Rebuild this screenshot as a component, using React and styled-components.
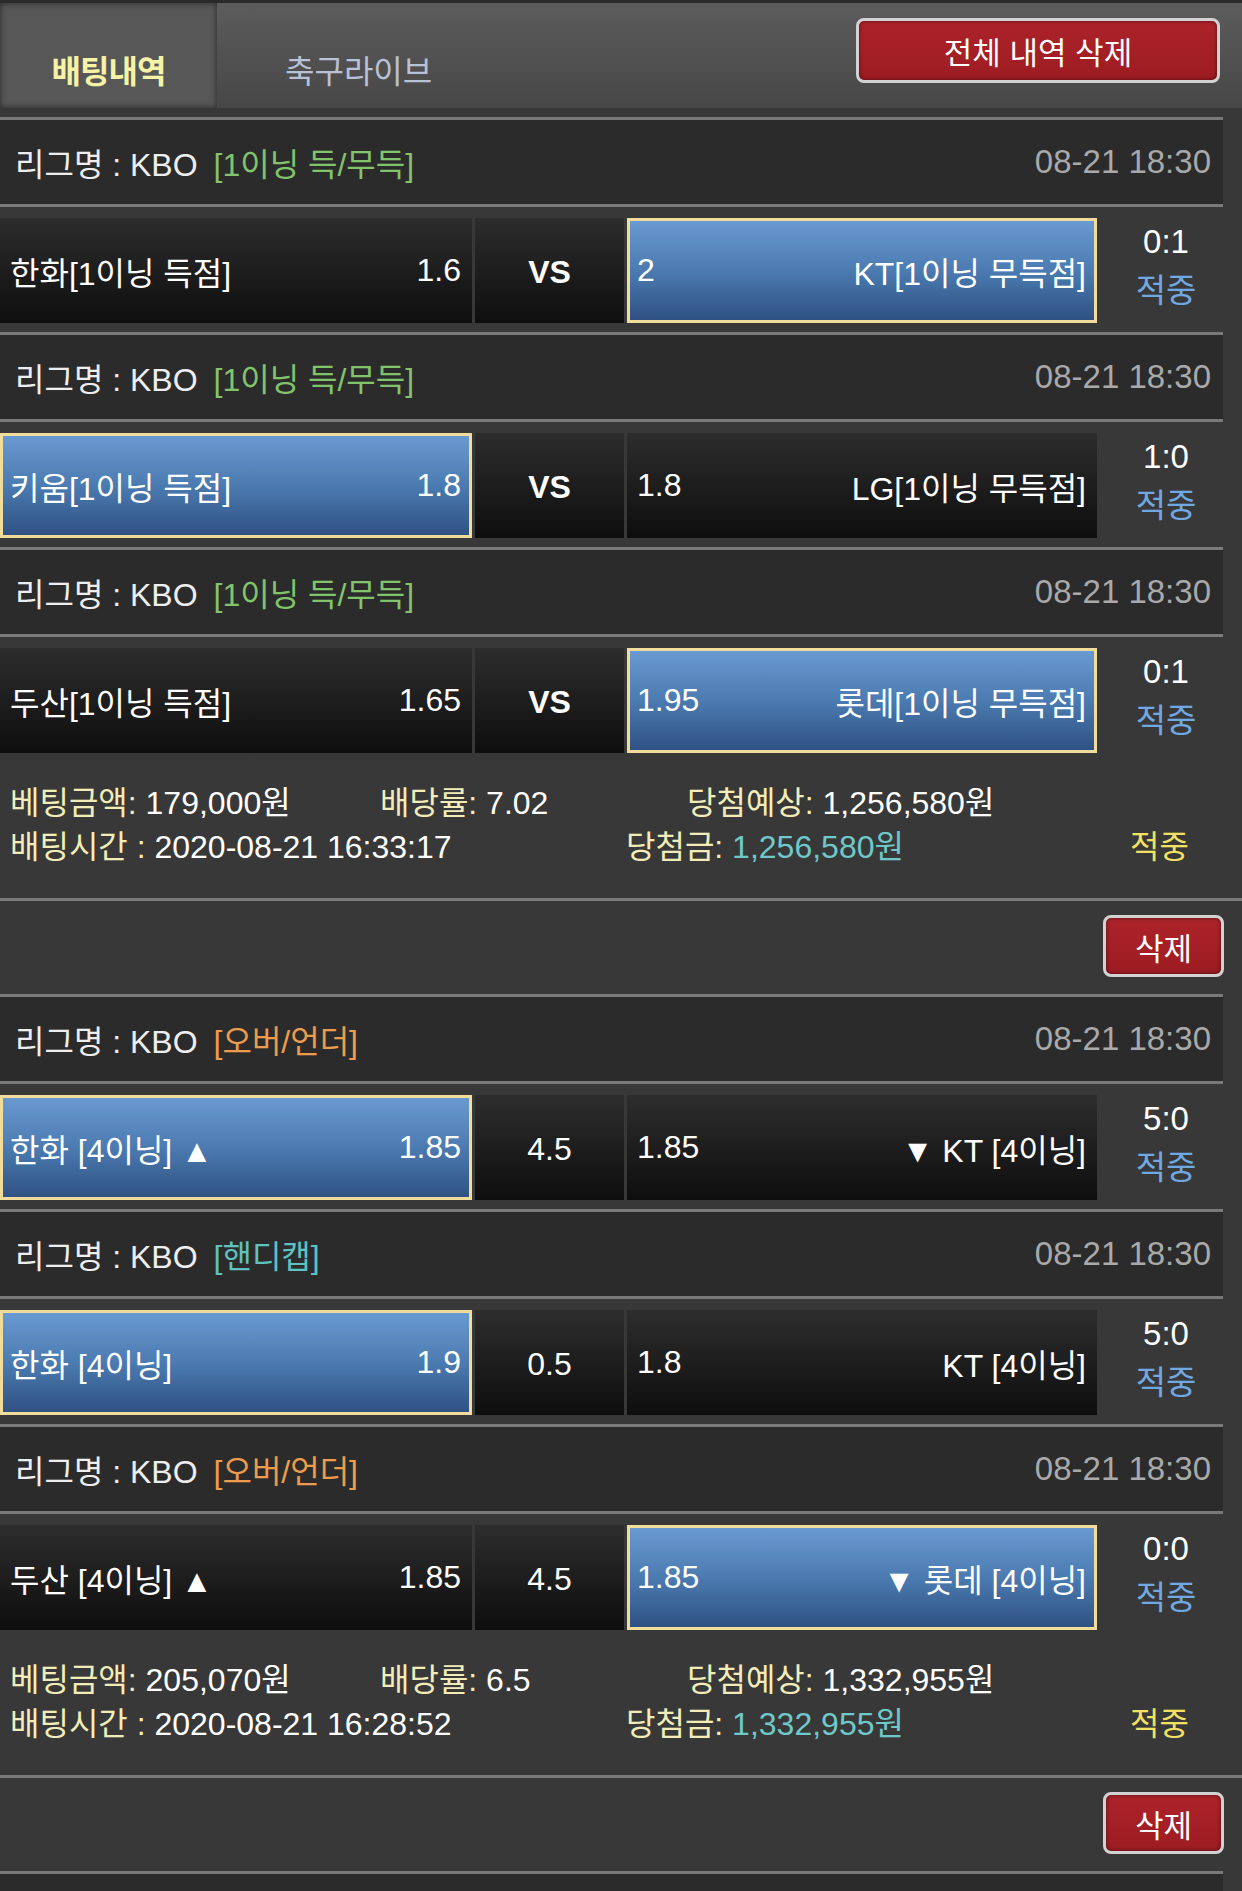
import React from 'react';
import styled, { createGlobalStyle, css } from 'styled-components';

const GlobalStyle = createGlobalStyle`
  html, body { margin: 0; padding: 0; background: #383838; }
  body {
    font-family: "Liberation Sans", "Noto Sans CJK KR", sans-serif;
    font-feature-settings: "palt";
  }
  * { box-sizing: border-box; }
`;

const Screen = styled.div`
  width: 1242px;
  height: 1891px;
  overflow: hidden;
  background: #383838;
  color: #ffffff;
  font-size: 31px;
`;

const Header = styled.header`
  display: flex;
  align-items: stretch;
  height: 108px;
  border-top: 3px solid #2a2a2a;
  background: linear-gradient(#5c5c5c, #474747);
  margin-bottom: 9px;
`;

const Tab = styled.div`
  display: flex;
  align-items: center;
  padding-top: 26px;
  font-size: 32px;
  ${(p) =>
    p.$active
      ? css`
          width: 217px;
          justify-content: center;
          background: #575757;
          box-shadow: inset 0 0 6px rgba(0, 0, 0, 0.55);
          color: #f6f2a6;
          font-weight: bold;
          letter-spacing: -1px;
        `
      : css`
          padding-left: 68px;
          color: #b9c1d6;
        `}
`;

const RedButton = styled.button`
  align-self: flex-start;
  background: linear-gradient(#ad232a, #9c1c22);
  border: 3px solid #d2d2d2;
  border-radius: 8px;
  color: #ffffff;
  font-family: inherit;
  font-size: 31px;
  box-shadow: inset 0 0 4px rgba(0, 0, 0, 0.5);
  cursor: pointer;
  padding: 0;
  ${(p) =>
    p.$wide
      ? css`
          width: 364px;
          height: 65px;
          margin: 15px 22px 0 auto;
        `
      : css`
          width: 121px;
          height: 62px;
        `}
`;

const LeagueRow = styled.div`
  width: 1223px;
  height: 90px;
  border-top: 3px solid #7a7a7a;
  border-bottom: 3px solid #7a7a7a;
  background: #2b2b2b;
  display: flex;
  align-items: center;
  padding: 0 12px 0 15px;
  font-size: 32px;
`;

const TailRow = styled.div`
  width: 1223px;
  height: 40px;
  border-top: 3px solid #7a7a7a;
  background: #2b2b2b;
`;

const LeagueName = styled.span`
  color: #eeeeee;
`;

const tagColors = {
  green: '#82c46c',
  orange: '#eb9c4c',
  teal: '#5ec2c0',
};

const Tag = styled.span`
  margin-left: 16px;
  color: ${(p) => tagColors[p.$tone]};
`;

const DateText = styled.span`
  margin-left: auto;
  color: #a9a9a9;
  font-size: 33px;
`;

const MatchRow = styled.div`
  display: flex;
  width: 1223px;
  height: 105px;
  margin: 11px 0 9px 0;
`;

const cellBg = css`
  background: linear-gradient(#2d2d2d, #0e0e0e);
`;

const Side = styled.div`
  display: flex;
  align-items: center;
  justify-content: space-between;
  width: ${(p) => p.$w}px;
  padding: 0 11px 0 10px;
  font-size: 32px;
  color: #ffffff;
  white-space: nowrap;
  ${(p) =>
    p.$picked
      ? css`
          background: linear-gradient(#6a9bd2, #4b7bb1 50%, #2e4f80);
          box-shadow: inset 0 0 0 3px #f1dc9b;
        `
      : cellBg}
`;

const Mid = styled.div`
  ${cellBg};
  width: 149px;
  margin: 0 3px;
  display: flex;
  align-items: center;
  justify-content: center;
  font-size: 32px;
  font-weight: ${(p) => (p.$bold ? 'bold' : 'normal')};
  padding-top: 3px;
`;

const ScoreCol = styled.div`
  flex: 1;
  display: flex;
  flex-direction: column;
  align-items: center;
  padding: 1px 0 0 12px;
  font-size: 33px;
`;

const ScoreLine = styled.div`
  height: 46px;
  display: flex;
  align-items: center;
`;

const Result = styled.span`
  color: ${(p) => (p.$tone === 'yellow' ? '#f2e162' : '#70a9e2')};
`;

const Info = styled.div`
  padding: 15px 0 33px 10px;
  font-size: 32px;
`;

const InfoLine = styled.div`
  display: grid;
  grid-template-columns: ${(p) => p.$cols};
  align-items: center;
  height: 44px;
  white-space: nowrap;
`;

const Label = styled.span`
  color: #f2edb8;
`;

const Value = styled.span`
  color: ${(p) => (p.$teal ? '#6fc9c9' : '#ffffff')};
`;

const DeleteRow = styled.div`
  border-top: 3px solid #7a7a7a;
  height: 96px;
  display: flex;
  justify-content: flex-end;
  align-items: flex-start;
  padding: 14px 18px 0 0;
`;

const bets = [
  {
    games: [
      { tag: '[1이닝 득/무득]', tone: 'green', date: '08-21 18:30', home: '한화[1이닝 득점]', homeOdds: '1.6', mid: 'VS', bold: true, awayOdds: '2', away: 'KT[1이닝 무득점]', pick: 'away', score: '0:1', result: '적중' },
      { tag: '[1이닝 득/무득]', tone: 'green', date: '08-21 18:30', home: '키움[1이닝 득점]', homeOdds: '1.8', mid: 'VS', bold: true, awayOdds: '1.8', away: 'LG[1이닝 무득점]', pick: 'home', score: '1:0', result: '적중' },
      { tag: '[1이닝 득/무득]', tone: 'green', date: '08-21 18:30', home: '두산[1이닝 득점]', homeOdds: '1.65', mid: 'VS', bold: true, awayOdds: '1.95', away: '롯데[1이닝 무득점]', pick: 'away', score: '0:1', result: '적중' },
    ],
    amount: '179,000원', rate: '7.02', expected: '1,256,580원', time: '2020-08-21 16:33:17', win: '1,256,580원', status: '적중',
  },
  {
    games: [
      { tag: '[오버/언더]', tone: 'orange', date: '08-21 18:30', home: '한화 [4이닝] ▲', homeOdds: '1.85', mid: '4.5', bold: false, awayOdds: '1.85', away: '▼ KT [4이닝]', pick: 'home', score: '5:0', result: '적중' },
      { tag: '[핸디캡]', tone: 'teal', date: '08-21 18:30', home: '한화 [4이닝]', homeOdds: '1.9', mid: '0.5', bold: false, awayOdds: '1.8', away: 'KT [4이닝]', pick: 'home', score: '5:0', result: '적중' },
      { tag: '[오버/언더]', tone: 'orange', date: '08-21 18:30', home: '두산 [4이닝] ▲', homeOdds: '1.85', mid: '4.5', bold: false, awayOdds: '1.85', away: '▼ 롯데 [4이닝]', pick: 'away', score: '0:0', result: '적중' },
    ],
    amount: '205,070원', rate: '6.5', expected: '1,332,955원', time: '2020-08-21 16:28:52', win: '1,332,955원', status: '적중',
  },
];

function Game({ g }) {
  return (
    <>
      <LeagueRow>
        <LeagueName>리그명 : KBO</LeagueName>
        <Tag $tone={g.tone}>{g.tag}</Tag>
        <DateText>{g.date}</DateText>
      </LeagueRow>
      <MatchRow>
        <Side $w={472} $picked={g.pick === 'home'}>
          <span>{g.home}</span>
          <span>{g.homeOdds}</span>
        </Side>
        <Mid $bold={g.bold}>{g.mid}</Mid>
        <Side $w={470} $picked={g.pick === 'away'}>
          <span>{g.awayOdds}</span>
          <span>{g.away}</span>
        </Side>
        <ScoreCol>
          <ScoreLine>{g.score}</ScoreLine>
          <ScoreLine>
            <Result>{g.result}</Result>
          </ScoreLine>
        </ScoreCol>
      </MatchRow>
    </>
  );
}

function Bet({ bet }) {
  return (
    <section>
      {bet.games.map((g, i) => (
        <Game key={i} g={g} />
      ))}
      <Info>
        <InfoLine $cols="370px 307px 1fr">
          <span><Label>베팅금액: </Label><Value>{bet.amount}</Value></span>
          <span><Label>배당률: </Label><Value>{bet.rate}</Value></span>
          <span><Label>당첨예상: </Label><Value>{bet.expected}</Value></span>
        </InfoLine>
        <InfoLine $cols="616px 504px 1fr">
          <span><Label>배팅시간 : </Label><Value>{bet.time}</Value></span>
          <span><Label>당첨금: </Label><Value $teal>{bet.win}</Value></span>
          <Result $tone="yellow">{bet.status}</Result>
        </InfoLine>
      </Info>
      <DeleteRow>
        <RedButton>삭제</RedButton>
      </DeleteRow>
    </section>
  );
}

export default function App() {
  return (
    <Screen>
      <GlobalStyle />
      <Header>
        <Tab $active>배팅내역</Tab>
        <Tab>축구라이브</Tab>
        <RedButton $wide>전체 내역 삭제</RedButton>
      </Header>
      {bets.map((b, i) => (
        <Bet key={i} bet={b} />
      ))}
      <TailRow />
    </Screen>
  );
}
